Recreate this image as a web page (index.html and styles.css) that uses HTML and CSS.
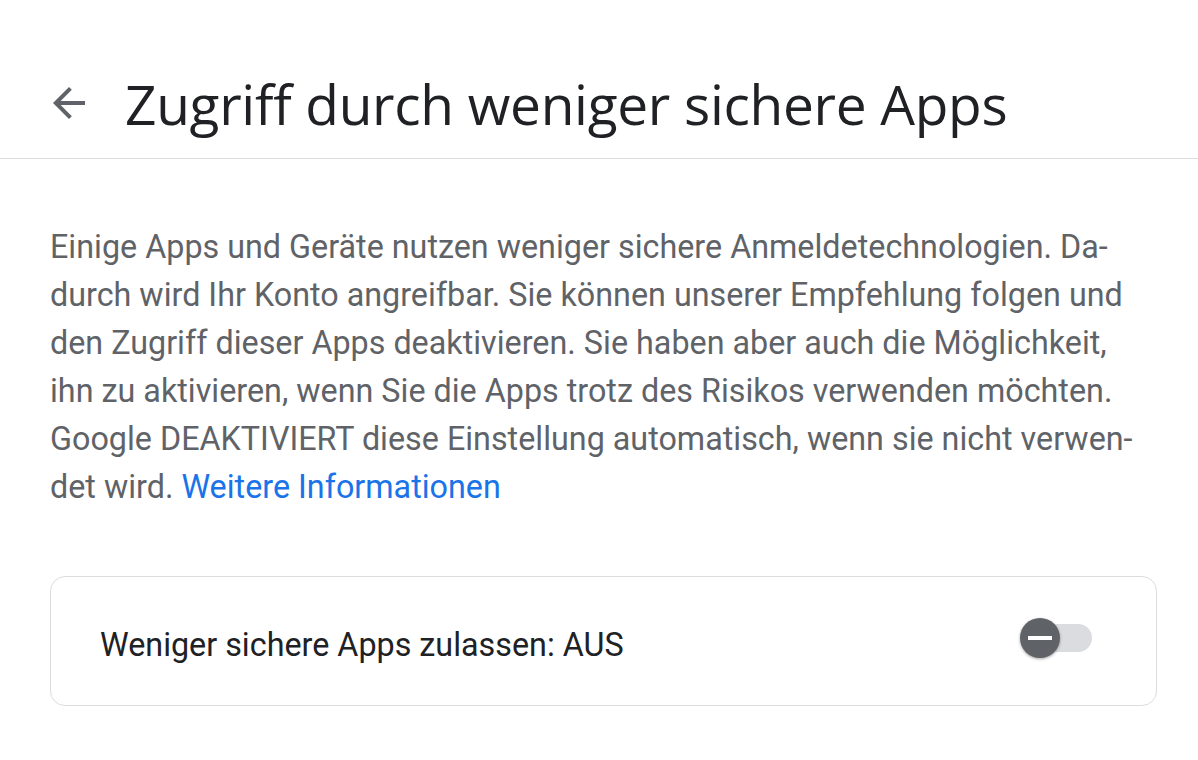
FILE: index.html
```html
<!DOCTYPE html>
<html lang="de">
<head>
    <meta charset="UTF-8">
    <meta name="viewport" content="width=device-width, initial-scale=1.0">
    <title>Zugriff durch weniger sichere Apps</title>
    <link rel="stylesheet" href="styles.css">
</head>
<body>
    <header class="header">
        <a class="back" href="#" aria-label="Zurück">
            <svg viewBox="0 0 24 24" width="48" height="48"><path d="M20 11H7.83l5.59-5.59L12 4l-8 8 8 8 1.41-1.41L7.83 13H20v-2z"/></svg>
        </a>
        <h1>Zugriff durch weniger sichere Apps</h1>
    </header>

    <main class="content">
        <p class="intro">Einige Apps und Geräte nutzen weniger sichere Anmeldetechnologien. Da-<br>durch wird Ihr Konto angreifbar. Sie können unserer Empfehlung folgen und<br>den Zugriff dieser Apps deaktivieren. Sie haben aber auch die Möglichkeit,<br>ihn zu aktivieren, wenn Sie die Apps trotz des Risikos verwenden möchten.<br>Google DEAKTIVIERT diese Einstellung automatisch, wenn sie nicht verwen-<br>det wird. <a href="#">Weitere Informationen</a></p>

        <div class="card">
            <span class="card-label">Weniger sichere Apps zulassen: AUS</span>
            <div class="switch">
                <span class="track"></span>
                <span class="knob"></span>
            </div>
        </div>
    </main>
</body>
</html>
```

FILE: styles.css
```css
body {
    margin: 0;
    background: #fff;
    font-family: Roboto, Arial, sans-serif;
    color: #202124;
}

/* Header */
.header {
    display: flex;
    align-items: center;
    height: 110px;
    padding-top: 48px;
    border-bottom: 1px solid #dadce0;
    box-sizing: content-box;
}

.back {
    display: flex;
    margin-left: 45px;
    margin-right: 32px;
    fill: #5f6368;
}

h1 {
    margin: 0;
    font-family: "Open Sans", sans-serif;
    font-weight: 400;
    font-size: 55px;
    color: #202124;
    letter-spacing: -0.3px;
}

/* Content */
.content {
    padding: 0 41px 0 50px;
}

.intro {
    margin: 64px 0 0;
    font-size: 32.3px;
    line-height: 48px;
    color: #5f6368;
    white-space: nowrap;
}

.intro a {
    color: #1a73e8;
    text-decoration: none;
}

.card {
    display: flex;
    align-items: center;
    justify-content: space-between;
    margin-top: 65px;
    height: 128px;
    padding: 0 64px 0 49px;
    border: 1px solid #dadce0;
    border-radius: 15px;
}

.card-label {
    font-size: 32.3px;
    color: #202124;
    padding-top: 8px;
}

.switch {
    position: relative;
    width: 72px;
    height: 40px;
    margin-bottom: 6px;
    display: flex;
    align-items: center;
    justify-content: flex-end;
}

.track {
    width: 66px;
    height: 28px;
    border-radius: 14px;
    background: #dadce0;
}

.knob {
    position: absolute;
    left: 0;
    top: 0;
    width: 40px;
    height: 40px;
    border-radius: 50%;
    background: #5f6368;
    box-shadow: 0 1px 3px rgba(0, 0, 0, 0.35);
}

.knob::after {
    content: "";
    position: absolute;
    left: 8px;
    top: 18px;
    width: 24px;
    height: 4px;
    background: #fff;
}
```
